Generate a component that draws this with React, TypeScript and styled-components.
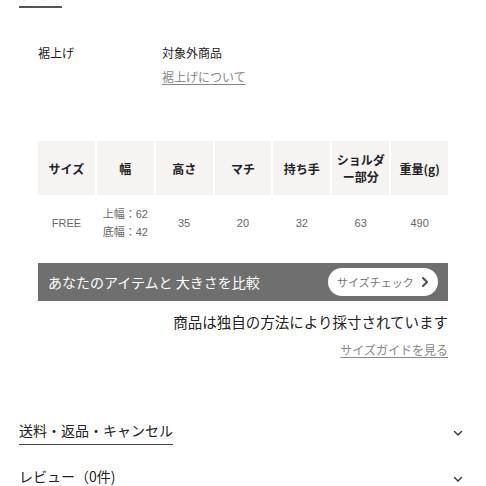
import React from 'react';
import styled, { createGlobalStyle } from 'styled-components';

const GlobalStyle = createGlobalStyle`
  html, body {
    margin: 0;
    padding: 0;
    background: #fff;
    overflow: hidden;
  }
  body {
    font-family: "Noto Sans CJK JP", "Noto Sans", sans-serif;
    color: #222;
  }
`;

const Page = styled.div`
  width: 486px;
  height: 486px;
  overflow: hidden;
  position: relative;
`;

const Inner = styled.div`
  margin-top: -14px;
`;

const TopTab = styled.div`
  margin-left: 19px;
  width: 43px;
  height: 20px;
  border-bottom: 2px solid #555;
  font-size: 12px;
  color: #999;
`;

const SpecRow = styled.div`
  display: flex;
  padding-left: 38px;
  margin-top: 36px;
  font-size: 12px;
  line-height: 18px;
`;

const SpecLabel = styled.div`
  width: 124px;
  color: #222;
`;

const SpecValue = styled.div`
  display: flex;
  flex-direction: column;
  gap: 6px;
  color: #222;
`;

const GrayLink = styled.a<{ $size?: number }>`
  color: #888;
  text-decoration: underline;
  text-underline-offset: 2px;
  font-size: ${(p) => p.$size ?? 12}px;
`;

const Table = styled.div`
  margin: 55px 38px 0 38px;
  display: grid;
  grid-template-columns: repeat(7, 1fr);
  column-gap: 2px;
`;

const HeadCell = styled.div`
  background: #f5f4f2;
  height: 54px;
  display: flex;
  align-items: center;
  justify-content: center;
  text-align: center;
  font-size: 12px;
  line-height: 17px;
  font-weight: 700;
  color: #222;
`;

const BodyCell = styled.div`
  height: 56px;
  display: flex;
  flex-direction: column;
  align-items: center;
  justify-content: center;
  font-size: 11px;
  line-height: 18px;
  color: #666;
  font-family: "Liberation Sans", "Noto Sans CJK JP", sans-serif;
`;

const CompareBar = styled.div`
  margin: 12px 38px 0 38px;
  height: 38px;
  background: #6f6f6f;
  display: flex;
  align-items: center;
  justify-content: space-between;
  padding: 0 10px;
  box-sizing: border-box;
`;

const BarText = styled.span`
  color: #fff;
  font-size: 14px;
`;

const CheckButton = styled.button`
  height: 28px;
  width: 110px;
  border: none;
  border-radius: 14px;
  background: #fff;
  color: #777;
  font-family: "Noto Sans CJK JP", sans-serif;
  font-size: 11px;
  display: flex;
  align-items: center;
  justify-content: space-between;
  padding: 0 8px 0 9px;
`;

const Note = styled.div`
  margin: 11px 38px 0 0;
  text-align: right;
  font-size: 14.5px;
  line-height: 20px;
  color: #222;
`;

const GuideRow = styled.div`
  margin: 7px 38px 0 0;
  text-align: right;
  line-height: 18px;
`;

const Accordion = styled.div<{ $top: number }>`
  display: flex;
  align-items: center;
  justify-content: space-between;
  padding: 0 22px 0 19px;
  margin-top: ${(p) => p.$top}px;
`;

const AccTitle = styled.span<{ $underline?: boolean }>`
  font-size: 14px;
  line-height: 20px;
  color: #222;
  padding-bottom: 4px;
  border-bottom: ${(p) => (p.$underline ? '1.5px solid #444' : '1.5px solid transparent')};
`;

const Chevron = () => (
  <svg width="12" height="12" viewBox="0 0 12 12" fill="none">
    <path d="M2.5 4.5 L6 8 L9.5 4.5" stroke="#333" strokeWidth="1.4" strokeLinecap="round" strokeLinejoin="round" />
  </svg>
);

const RightChevron = () => (
  <svg width="10" height="12" viewBox="0 0 10 12" fill="none">
    <path d="M3 2 L7 6 L3 10" stroke="#555" strokeWidth="2.2" strokeLinecap="round" strokeLinejoin="round" />
  </svg>
);

const heads: React.ReactNode[] = ['サイズ', '幅', '高さ', 'マチ', '持ち手', <>ショルダ<br />ー部分</>, '重量(g)'];

const App: React.FC = () => {
  return (
    <Page>
      <GlobalStyle />
      <Inner>
        <TopTab>サイズ</TopTab>
        <SpecRow>
          <SpecLabel>裾上げ</SpecLabel>
          <SpecValue>
            <span>対象外商品</span>
            <GrayLink href="#">裾上げについて</GrayLink>
          </SpecValue>
        </SpecRow>

        <Table>
          {heads.map((h, i) => (
            <HeadCell key={i}>{h}</HeadCell>
          ))}
          <BodyCell>FREE</BodyCell>
          <BodyCell>
            <span>上幅：62</span>
            <span>底幅：42</span>
          </BodyCell>
          <BodyCell>35</BodyCell>
          <BodyCell>20</BodyCell>
          <BodyCell>32</BodyCell>
          <BodyCell>63</BodyCell>
          <BodyCell>490</BodyCell>
        </Table>

        <CompareBar>
          <BarText>あなたのアイテムと 大きさを比較</BarText>
          <CheckButton>
            <span>サイズチェック</span>
            <RightChevron />
          </CheckButton>
        </CompareBar>

        <Note>商品は独自の方法により採寸されています</Note>
        <GuideRow>
          <GrayLink href="#" $size={12}>サイズガイドを見る</GrayLink>
        </GuideRow>

        <Accordion $top={61}>
          <AccTitle $underline>送料・返品・キャンセル</AccTitle>
          <Chevron />
        </Accordion>
        <Accordion $top={21}>
          <AccTitle>レビュー（0件)</AccTitle>
          <Chevron />
        </Accordion>
      </Inner>
    </Page>
  );
};

export default App;
